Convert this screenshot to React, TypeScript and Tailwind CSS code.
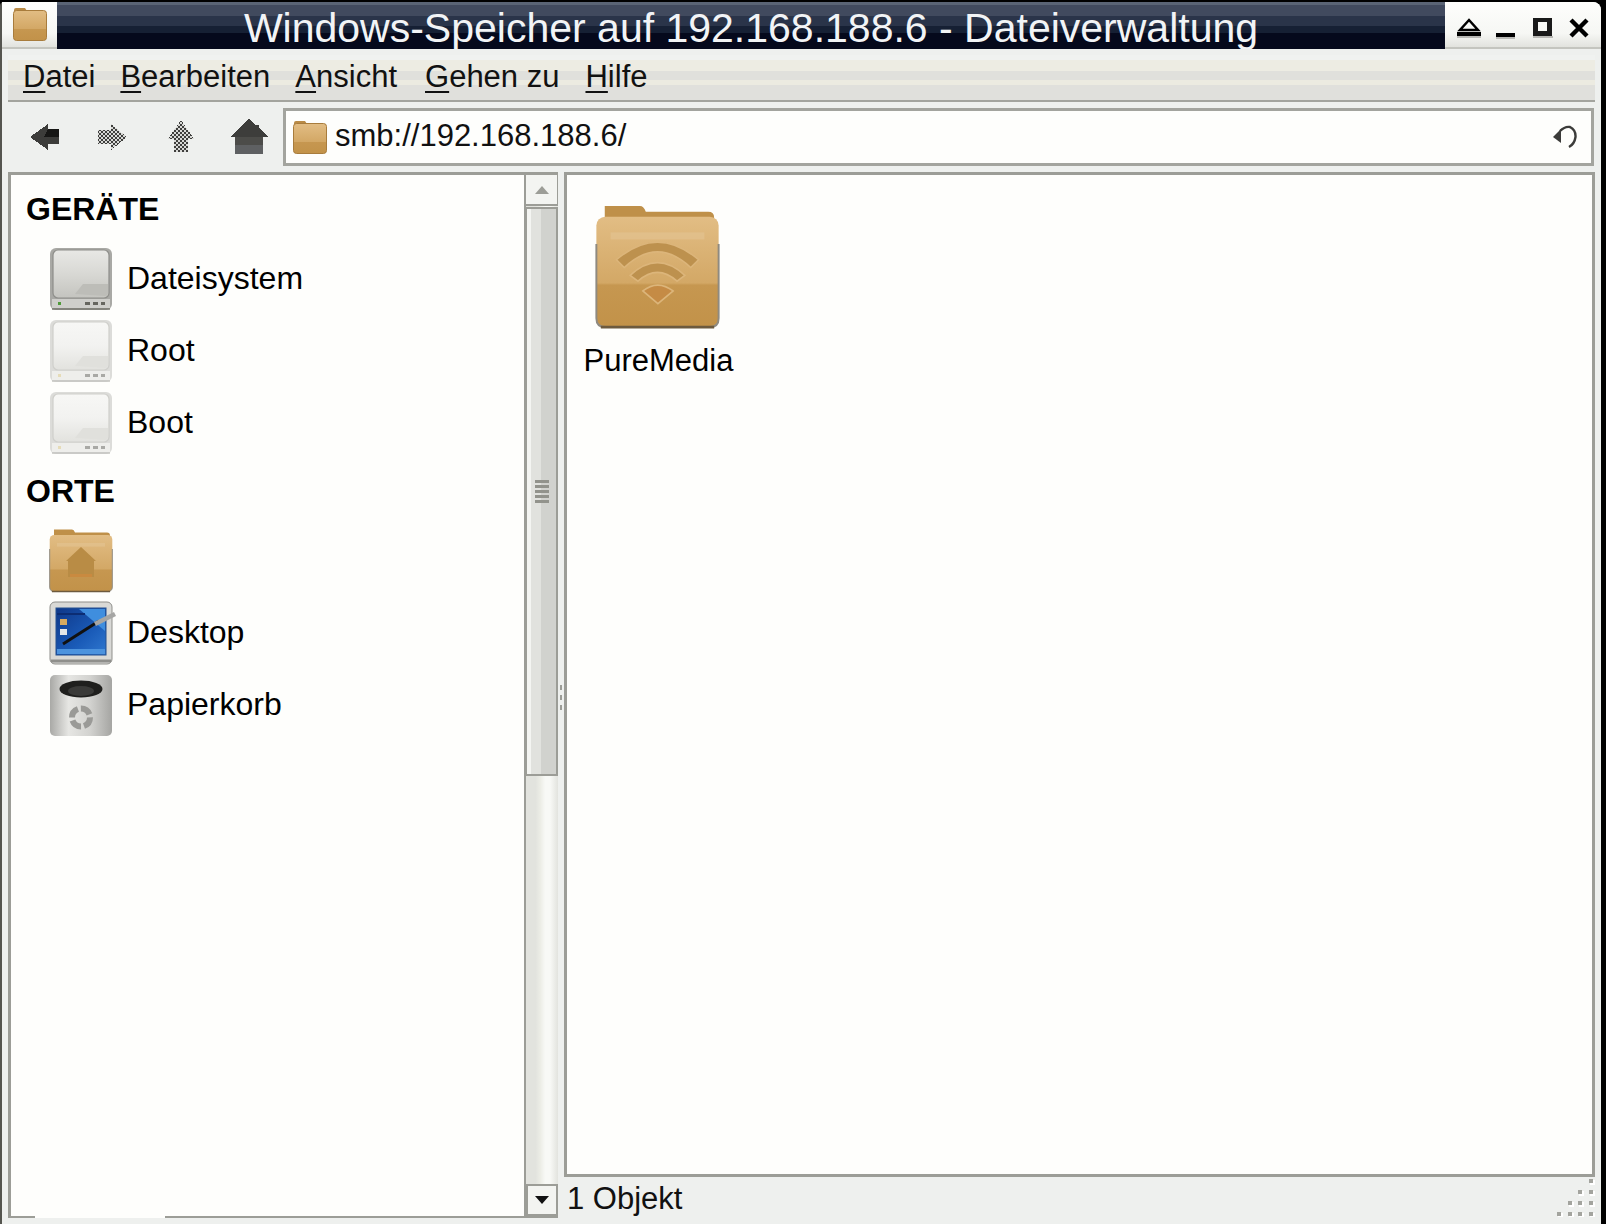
import React from 'react';

const font = { fontFamily: '"Liberation Sans", Arial, sans-serif' };

const FolderDefs: React.FC<{ id: string }> = ({ id }) => (
  <defs>
    <linearGradient id={id} x1="0" y1="0" x2="0" y2="1">
      <stop offset="0" stopColor="#e2bd84" />
      <stop offset="0.6" stopColor="#d3a866" />
      <stop offset="0.62" stopColor="#c69750" />
      <stop offset="1" stopColor="#c29249" />
    </linearGradient>
  </defs>
);

// plain folder used in the title bar and the address box
const SmallFolder: React.FC<{ id: string }> = ({ id }) => (
  <svg width="34" height="36" viewBox="0 0 34 36">
    <FolderDefs id={id} />
    <path d="M3 2 h9 l2 3 h17 a2 2 0 0 1 2 2 v4 H1 V4 a2 2 0 0 1 2-2z" fill="#b98a45" />
    <rect x="0.5" y="4.5" width="33" height="30" rx="3" fill={`url(#${id})`} stroke="#a87c3c" />
  </svg>
);

const BigFolder: React.FC<{ id: string; size: number; children?: React.ReactNode }> = ({ id, size, children }) => (
  <svg width={size} height={size} viewBox="0 0 64 64">
    <FolderDefs id={id} />
    <path d="M5 0.5 h18 q2 0 3 3 h32 q3 0 3 3 v6 H5z" fill="#bf9049" />
    <rect x="0.7" y="6" width="62.6" height="56.5" rx="4.5" fill={`url(#${id})`} />
    <path d="M0.7 20 V58 q0 4.5 4.5 4.5 h53.6 q4.5 0 4.5-4.5 V20" fill="none" stroke="#8f8a80" strokeWidth="1" />
    <path d="M3 62.5 h58" stroke="#6d5a3e" strokeWidth="1.4" />
    <rect x="8" y="14" width="48" height="3.6" fill="#e3c290" opacity="0.7" />
    {children}
  </svg>
);

const WifiMark = () => (
  <g fill="#bd914e" stroke="#dcb57a" strokeWidth="0.8">
    <path d="M11 28 Q32 10 53 28 L49 32 Q32 16 15 32z" />
    <path d="M18 36 Q32 23 46 36 L42 39 Q32 30 22 39z" />
    <path d="M24.5 44 Q32 38 40 44 L32.2 50.5z" fill="#c58b45" />
  </g>
);

const HomeMark = () => (
  <g>
    <path d="M32 18 L47 32 H45 V48 H19 V32 H17z" fill="#b98c45" />
    <rect x="21" y="45" width="22" height="3" fill="#c98a40" />
  </g>
);

const DriveIcon: React.FC<{ id: string; muted?: boolean }> = ({ id, muted }) => (
  <svg width="64" height="64" viewBox="0 0 64 64">
    <defs>
      <linearGradient id={id} x1="0" y1="0" x2="0" y2="1">
        <stop offset="0" stopColor={muted ? '#f7f7f5' : '#e8e8e5'} />
        <stop offset="0.5" stopColor={muted ? '#f2f2f0' : '#d8d8d4'} />
        <stop offset="1" stopColor={muted ? '#e2e2de' : '#c4c4bf'} />
      </linearGradient>
    </defs>
    <rect x="1" y="1" width="62" height="62" rx="6" fill={muted ? '#dcdcd9' : '#a9a9a5'} />
    <rect x="4" y="3" width="56" height="48" rx="5" fill={`url(#${id})`} stroke={muted ? '#cfcfcb' : '#8e8e8a'} strokeWidth="1.2" />
    <path d="M26 47 L34 37 H59 V46 q0 3-3 3z" fill={muted ? '#e0e0dc' : '#bdbdb8'} />
    <rect x="3" y="52" width="58" height="9" fill={muted ? '#eeeeeb' : '#cfcfcb'} />
    <path d="M3 62 H61" stroke={muted ? '#c4c4c0' : '#77776f'} strokeWidth="1.5" />
    <rect x="9" y="55" width="3" height="3" fill={muted ? '#e6dcb8' : '#4f9a3a'} />
    <rect x="36" y="55" width="5" height="3" fill={muted ? '#a9a9a5' : '#66665f'} />
    <rect x="44" y="55" width="5" height="3" fill={muted ? '#a9a9a5' : '#66665f'} />
    <rect x="52" y="55" width="4" height="3" fill={muted ? '#a9a9a5' : '#66665f'} />
  </svg>
);

const DesktopIcon = () => (
  <svg width="68" height="64" viewBox="0 0 68 64">
    <defs>
      <linearGradient id="deskBlue" x1="0" y1="0" x2="1" y2="1">
        <stop offset="0" stopColor="#0f3788" />
        <stop offset="0.6" stopColor="#1a5bb8" />
        <stop offset="1" stopColor="#2f78d0" />
      </linearGradient>
    </defs>
    <rect x="1" y="1" width="62" height="62" rx="5" fill="#d9d9d6" stroke="#8f8f8b" />
    <rect x="7" y="7" width="50" height="47" fill="url(#deskBlue)" stroke="#24508f" />
    <path d="M30 8 H56 V30z" fill="#3f8ede" />
    <path d="M8 13 H36" stroke="#0c2d73" strokeWidth="2" />
    <rect x="11" y="18" width="7" height="6" fill="#d6a960" />
    <rect x="11" y="28" width="7" height="6" fill="#e6e6e6" />
    <rect x="8" y="48" width="48" height="5" fill="#4c93de" />
    <path d="M14 43 L50 20" stroke="#111" strokeWidth="3" />
    <path d="M46 23 L66 13" stroke="#a6a6a4" strokeWidth="4.5" />
    <path d="M2 60 H62" stroke="#8f8f8b" strokeWidth="3" />
  </svg>
);

const TrashIcon = () => (
  <svg width="64" height="64" viewBox="0 0 64 64">
    <defs>
      <linearGradient id="trashMetal" x1="0" y1="0" x2="1" y2="0">
        <stop offset="0" stopColor="#a9a9a6" />
        <stop offset="0.3" stopColor="#e6e6e3" />
        <stop offset="0.65" stopColor="#d2d2cf" />
        <stop offset="1" stopColor="#a5a5a2" />
      </linearGradient>
    </defs>
    <rect x="1" y="2" width="62" height="61" rx="5" fill="url(#trashMetal)" />
    <ellipse cx="32" cy="16" rx="21.5" ry="8.5" fill="#1f1f1d" />
    <ellipse cx="32" cy="18" rx="13" ry="5" fill="#3a3a38" />
    <circle cx="32" cy="44.5" r="9" fill="none" stroke="#9a9a97" strokeWidth="6" strokeDasharray="11 3" />
  </svg>
);

const checker = (
  <pattern id="checker" width="4" height="4" patternUnits="userSpaceOnUse">
    <rect width="4" height="4" fill="#d8d9d6" />
    <rect width="2" height="2" fill="#3f3f3d" />
    <rect x="2" y="2" width="2" height="2" fill="#3f3f3d" />
  </pattern>
);

const BackIcon = () => (
  <svg width="30" height="28" viewBox="0 0 30 28" shapeRendering="crispEdges">
    <path d="M0 14 L18 1 V6 H29 V21 H18 V27z" fill="#3c3c3a" />
    <path d="M18 6 H29 V14 H14z" fill="#161615" />
  </svg>
);

const ForwardIcon = () => (
  <svg width="30" height="28" viewBox="0 0 30 28" shapeRendering="crispEdges">
    <defs>{checker}</defs>
    <path d="M30 14 L14 1 V7 H1 V21 H14 V27z" fill="url(#checker)" />
  </svg>
);

const UpIcon = () => (
  <svg width="26" height="34" viewBox="0 0 26 34" shapeRendering="crispEdges">
    <path d="M13 0 L26 19 H20 V32 H6 V19 H0z" fill="url(#checker)" />
  </svg>
);

const HomeIcon = () => (
  <svg width="38" height="36" viewBox="0 0 38 36" shapeRendering="crispEdges">
    <path d="M19 0 L26 6 H29 V9 L38 18 H33 V35 H5 V18 H0z" fill="#3d3d3b" />
    <rect x="5" y="18" width="28" height="8" fill="#4c4c49" />
    <rect x="5" y="26" width="28" height="9" fill="#5e6062" />
  </svg>
);

const ReloadIcon = () => (
  <svg width="24" height="24" viewBox="0 0 24 24" fill="none">
    <path d="M7 6 Q12 1 17 2 Q23 5 22.5 12 Q21.5 19 16 22" stroke="#3c3c3a" strokeWidth="2.4" />
    <path d="M0 12 L8 4 V18z" fill="#3c3c3a" />
  </svg>
);

const WindowButtons = () => (
  <div className="flex items-start gap-[24px] pl-[12px] pt-[16px] text-black">
    <svg width="24" height="22" viewBox="0 0 24 22">
      <path d="M12 2 L21 12 H3z" fill="none" stroke="#000" strokeWidth="2.5" />
      <rect y="14" width="24" height="4" fill="#000" />
      <rect y="18" width="24" height="2" fill="#b9b9b5" />
    </svg>
    <svg width="19" height="22" viewBox="0 0 19 22" className="-ml-[9px]">
      <rect y="15" width="19" height="4" fill="#000" />
      <rect y="19" width="19" height="2" fill="#b9b9b5" />
    </svg>
    <svg width="20" height="22" viewBox="0 0 20 22" className="-ml-[6px]">
      <rect x="2.5" y="1.5" width="14" height="14" fill="none" stroke="#1a1a1a" strokeWidth="5" />
      <rect y="18" width="20" height="2" fill="#b9b9b5" />
    </svg>
    <svg width="20" height="22" viewBox="0 0 20 22" className="-ml-[8px]">
      <path d="M2 2 L18 18 M18 2 L2 18" stroke="#000" strokeWidth="4.4" />
    </svg>
  </div>
);

const Scrollbar = () => (
  <div className="flex h-full w-[34px] shrink-0 flex-col border-l-[2px] border-[#9c9d97] bg-[linear-gradient(90deg,#e2e3de_0,#e2e3de_30%,#ecede6_45%,#f8f9f6_60%,#f8f9f6_75%,#e2e3de_100%)]">
    <div className="flex h-[31px] shrink-0 items-center justify-center border-b-[2px] border-r-[1px] border-[#9c9d97] bg-[#f3f4f1]">
      <svg width="14" height="8" viewBox="0 0 14 8"><path d="M7 0 L14 8 H0z" fill="#9c9d97" /></svg>
    </div>
    <div className="mt-[1px] flex h-[569px] shrink-0 items-start justify-center border-[2px] border-[#9c9d97] border-l-[1px] bg-[linear-gradient(90deg,#f4f5f2_0,#f4f5f2_15%,#e1e2de_15%,#e1e2de_50%,#d1d2ce_50%)]">
      <div className="mt-[271px] flex w-[14px] flex-col gap-[2px]">
        {[0, 1, 2, 3, 4].map((i) => (
          <div key={i} className="h-[3px] bg-[#92938c]" />
        ))}
      </div>
    </div>
    <div className="flex-1" />
    <div className="flex h-[32px] shrink-0 items-center justify-center border-[2px] border-[#9c9d97] border-r-[2px] bg-[#f3f4f1]">
      <svg width="14" height="8" viewBox="0 0 14 8"><path d="M0 0 H14 L7 8z" fill="#111" /></svg>
    </div>
  </div>
);

const SideHeader: React.FC<{ label: string }> = ({ label }) => (
  <div className="flex h-[66px] items-center pb-[2px] pl-[15px] text-[32px] font-bold text-black">{label}</div>
);

const SideRow: React.FC<{ icon: React.ReactNode; label?: string }> = ({ icon, label }) => (
  <div className="flex h-[72px] items-center pl-[38px]">
    <div className="w-[78px] shrink-0">{icon}</div>
    {label && <span className="-mt-[3px] text-[32px] text-black">{label}</span>}
  </div>
);

const Mnemonic: React.FC<{ first: string; rest: string }> = ({ first, rest }) => (
  <span className="text-[31px] text-[#111]">
    <span className="underline decoration-[2px] underline-offset-[4px]">{first}</span>
    {rest}
  </span>
);

const App: React.FC = () => {
  return (
    <div style={font} className="relative flex h-[1224px] w-[1606px] flex-col overflow-hidden bg-black pt-[2px]">
      <div className="flex h-[1222px] w-[1601px] flex-col rounded-tl-[4px] rounded-tr-[8px] border-l-[2px] border-[#55554f] bg-[#f3f5f1]">
        {/* title bar */}
        <div className="flex h-[47px] shrink-0">
          <div className="w-[55px] shrink-0 border-b-[2px] border-[#c4c5bf] bg-[linear-gradient(180deg,#fefefc_0,#f6f7f4_70%,#e2e3de_100%)] pl-[11px] pt-[4px]">
            <SmallFolder id="titleFolder" />
          </div>
          <div className="flex flex-1 items-center justify-center bg-[linear-gradient(180deg,#5a6475_0,#5a6475_6%,#414a5e_6%,#414a5e_30%,#2a3449_30%,#2a3449_50%,#162034_50%,#162034_65%,#05091c_65%)] pt-[7px] text-[41px] text-[#f2f4f6]">
            Windows-Speicher auf 192.168.188.6 - Dateiverwaltung
          </div>
          <div className="w-[156px] shrink-0 rounded-tr-[8px] border-b-[2px] border-[#c4c5bf] bg-[linear-gradient(180deg,#fefefc_0,#f6f7f4_70%,#e2e3de_100%)]">
            <WindowButtons />
          </div>
        </div>

        <div className="flex min-h-0 flex-1 flex-col bg-[#eef0ee] pl-[6px] pr-[6px] pb-[6px] pt-[6px]">
          {/* menu bar */}
          <div className="flex h-[47px] shrink-0 items-center gap-[25px] border-b-[2px] border-[#a3a49e] bg-[linear-gradient(180deg,#f0f2f0_0,#f0f2f0_11%,#edece3_11%,#edece3_36%,#e0e0dc_36%,#e0e0dc_56%,#ecebe1_56%,#ecebe1_67%,#e0e0dc_67%)] pl-[15px]">
            <Mnemonic first="D" rest="atei" />
            <Mnemonic first="B" rest="earbeiten" />
            <Mnemonic first="A" rest="nsicht" />
            <div className="ml-[3px]"><Mnemonic first="G" rest="ehen zu" /></div>
            <div className="ml-[1px]"><Mnemonic first="H" rest="ilfe" /></div>
          </div>

          {/* tool bar */}
          <div className="flex h-[70px] shrink-0 items-center">
            <div className="flex w-[275px] shrink-0 items-center pl-[22px]">
              <BackIcon />
              <div className="ml-[37px]"><ForwardIcon /></div>
              <div className="ml-[41px]"><UpIcon /></div>
              <div className="ml-[36px]"><HomeIcon /></div>
            </div>
            <div className="flex h-[58px] w-[1311px] items-center border-[3px] border-[#a3a49e] bg-[#fefefc] pl-[7px] pr-[14px] text-[31px] text-[#111]">
              <SmallFolder id="addrFolder" />
              <span className="-mt-[2px] ml-[8px] flex-1">smb://192.168.188.6/</span>
              <ReloadIcon />
            </div>
          </div>

          {/* panes */}
          <div className="flex min-h-0 flex-1">
            <div className="flex w-[550px] shrink-0 flex-col">
              <div className="flex min-h-0 flex-1 border-l-[3px] border-t-[3px] border-[#9c9d97] bg-[#fefefc]">
                <div className="min-w-0 flex-1 pt-[2px]">
                  <SideHeader label="GERÄTE" />
                  <SideRow icon={<DriveIcon id="drive1" />} label="Dateisystem" />
                  <SideRow icon={<DriveIcon id="drive2" muted />} label="Root" />
                  <SideRow icon={<DriveIcon id="drive3" muted />} label="Boot" />
                  <SideHeader label="ORTE" />
                  <SideRow icon={<BigFolder id="homeFolder" size={64} ><HomeMark /></BigFolder>} />
                  <SideRow icon={<DesktopIcon />} label="Desktop" />
                  <SideRow icon={<TrashIcon />} label="Papierkorb" />
                </div>
                <Scrollbar />
              </div>
              <div className="flex h-[2px] shrink-0">
                <div className="w-[27px] bg-[#9c9d97]" />
                <div className="w-[130px] bg-[#fefefc]" />
                <div className="flex-1 bg-[#9c9d97]" />
              </div>
            </div>

            {/* pane handle */}
            <div className="flex w-[6px] shrink-0 flex-col items-center justify-center gap-[5px] pt-[4px]">
              <div className="h-[5px] w-[2px] bg-[#9c9d97]" />
              <div className="h-[5px] w-[2px] bg-[#9c9d97]" />
              <div className="h-[5px] w-[2px] bg-[#9c9d97]" />
            </div>

            <div className="flex min-w-0 flex-1 flex-col">
              <div className="flex-1 border-[3px] border-[#9c9d97] bg-[#fefefc] pl-[13px] pt-[30px]">
                <div className="flex w-[155px] flex-col items-center">
                  <BigFolder id="wifiFolder" size={125}><WifiMark /></BigFolder>
                  <span className="ml-[2px] mt-[8px] text-[31px] text-black">PureMedia</span>
                </div>
              </div>
              {/* status bar */}
              <div className="relative flex h-[41px] shrink-0 items-center pl-[3px] pt-[4px] text-[31px] text-[#111]">
                1 Objekt
                <svg className="absolute bottom-[1px] right-[0px]" width="38" height="38" viewBox="0 0 38 38" shapeRendering="crispEdges">
                  {[
                    [32, 2], [21, 13], [32, 13], [11, 24], [21, 24], [32, 24], [0, 35], [11, 35], [21, 35], [32, 35],
                  ].map(([x, y], i) => (
                    <g key={i}>
                      <rect x={x + 1} y={y - 1} width="5" height="5" fill="#fff" />
                      <rect x={x} y={y - 2} width="4" height="4" fill="#a3a49e" />
                    </g>
                  ))}
                </svg>
              </div>
            </div>
          </div>
        </div>
      </div>
    </div>
  );
};

export default App;
